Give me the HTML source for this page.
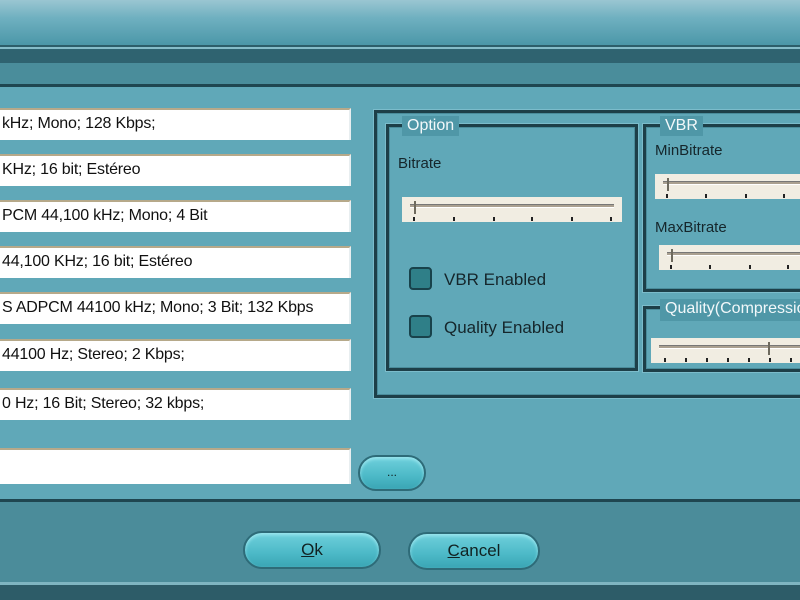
<!DOCTYPE html>
<html><head><meta charset="utf-8"><style>
*{margin:0;padding:0;box-sizing:border-box}
body{width:800px;height:600px;overflow:hidden;background:#60a8b8;font-family:"Liberation Sans",sans-serif;position:relative}
.a{position:absolute}
.tf{position:absolute;left:0;width:351px;height:32px;background:#fff;border-top:2px solid #b6a98a;border-right:2px solid #e8eef0;font-size:16px;line-height:28px;color:#111;white-space:nowrap;overflow:hidden;padding-left:2px;letter-spacing:-0.2px}
.grp{position:absolute;border:3px solid #1d3f48;box-shadow:inset 0 0 0 1px #4a8c9b, 0 0 0 1px #7bbccb}
.lg{position:absolute;background:#4f97a7;color:#f2f8fa;font-size:16px;line-height:20px;padding:0 5px;white-space:nowrap}
.lbl{position:absolute;font-size:15px;color:#15262b}
.sl{position:absolute;background:#f1ede2;height:25px}
.sl .tr{position:absolute;left:8px;right:8px;top:7px;height:4px;border-top:1px solid #777;border-bottom:1px solid #fff;background:#aaa090}
.sl .th{position:absolute;top:4px;width:4px;height:13px;border-left:2px solid #6e6a5e}
.tk{position:absolute;bottom:1px;width:2px;height:4px;background:#222}
.cb{position:absolute;width:23px;height:23px;border:2px solid #18424b;border-radius:4px;background:#2f7f88}
.btn{position:absolute;border-radius:20px;background:linear-gradient(#6fd0dc,#4cb9c7 60%,#3aa5b4);border:2px solid #2e6b78;box-shadow:inset 0 2px 3px #9be6ee;text-align:center;font-size:17px;color:#122}
</style></head><body>
<div class="a" style="left:0;top:0;width:800px;height:45px;background:linear-gradient(#9ac6d2,#6fb0c0 40%,#4b97a8)"></div>
<div class="a" style="left:0;top:45px;width:800px;height:2px;background:#2d5e6a"></div>
<div class="a" style="left:0;top:47px;width:800px;height:2px;background:#86bdc9"></div>
<div class="a" style="left:0;top:49px;width:800px;height:14px;background:#2f6370"></div>
<div class="a" style="left:0;top:63px;width:800px;height:21px;background:#4a8d9b"></div>
<div class="a" style="left:0;top:84px;width:800px;height:3px;background:#1f4650"></div>

<div class="tf" style="top:108px">kHz; Mono; 128 Kbps;</div>
<div class="tf" style="top:154px">KHz; 16 bit; Estéreo</div>
<div class="tf" style="top:200px">PCM 44,100 kHz; Mono; 4 Bit</div>
<div class="tf" style="top:246px">44,100 KHz; 16 bit; Estéreo</div>
<div class="tf" style="top:292px">S ADPCM 44100 kHz; Mono; 3 Bit; 132 Kbps</div>
<div class="tf" style="top:339px">44100 Hz; Stereo; 2 Kbps;</div>
<div class="tf" style="top:388px">0 Hz; 16 Bit; Stereo; 32 kbps;</div>
<div class="tf" style="top:448px;height:36px"></div>
<div class="btn" style="left:358px;top:455px;width:68px;height:36px;border-radius:18px;font-size:12px;line-height:30px">...</div>

<div class="grp" style="left:374px;top:110px;width:440px;height:288px"></div>
<div class="grp" style="left:386px;top:124px;width:252px;height:247px"></div>
<div class="lg" style="left:402px;top:116px">Option</div>
<div class="lbl" style="left:398px;top:155px">Bitrate</div>
<div class="sl" style="left:402px;top:197px;width:220px"><div class="tr"></div><div class="th" style="left:12px"></div>
<div class="tk" style="left:11px"></div><div class="tk" style="left:51px"></div><div class="tk" style="left:91px"></div><div class="tk" style="left:129px"></div><div class="tk" style="left:169px"></div><div class="tk" style="left:208px"></div></div>
<div class="cb" style="left:409px;top:267px"></div>
<div class="lbl" style="left:444px;top:270px;font-size:17px">VBR Enabled</div>
<div class="cb" style="left:409px;top:315px"></div>
<div class="lbl" style="left:444px;top:318px;font-size:17px">Quality Enabled</div>

<div class="grp" style="left:643px;top:124px;width:170px;height:168px"></div>
<div class="lg" style="left:660px;top:116px">VBR</div>
<div class="lbl" style="left:655px;top:142px">MinBitrate</div>
<div class="sl" style="left:655px;top:174px;width:160px"><div class="tr" style="right:0"></div><div class="th" style="left:12px"></div>
<div class="tk" style="left:11px"></div><div class="tk" style="left:50px"></div><div class="tk" style="left:90px"></div><div class="tk" style="left:128px"></div></div>
<div class="lbl" style="left:655px;top:219px">MaxBitrate</div>
<div class="sl" style="left:659px;top:245px;width:160px"><div class="tr" style="right:0"></div><div class="th" style="left:12px"></div>
<div class="tk" style="left:11px"></div><div class="tk" style="left:50px"></div><div class="tk" style="left:90px"></div><div class="tk" style="left:128px"></div></div>

<div class="grp" style="left:643px;top:306px;width:170px;height:66px"></div>
<div class="lg" style="left:660px;top:299px;height:22px">Quality(Compression)</div>
<div class="sl" style="left:651px;top:338px;width:160px"><div class="tr" style="right:0"></div><div class="th" style="left:117px"></div>
<div class="tk" style="left:13px"></div><div class="tk" style="left:34px"></div><div class="tk" style="left:55px"></div><div class="tk" style="left:76px"></div><div class="tk" style="left:97px"></div><div class="tk" style="left:118px"></div><div class="tk" style="left:139px"></div></div>

<div class="a" style="left:0;top:499px;width:800px;height:3px;background:#1f4650"></div>
<div class="a" style="left:0;top:502px;width:800px;height:82px;background:#4b8c9a"></div>
<div class="a" style="left:0;top:582px;width:800px;height:3px;background:#7fb5c1"></div>
<div class="a" style="left:0;top:585px;width:800px;height:15px;background:#2d5c68"></div>
<div class="btn" style="left:243px;top:531px;width:138px;height:38px;line-height:34px"><u>O</u>k</div>
<div class="btn" style="left:408px;top:532px;width:132px;height:38px;line-height:34px"><u>C</u>ancel</div>
</body></html>
